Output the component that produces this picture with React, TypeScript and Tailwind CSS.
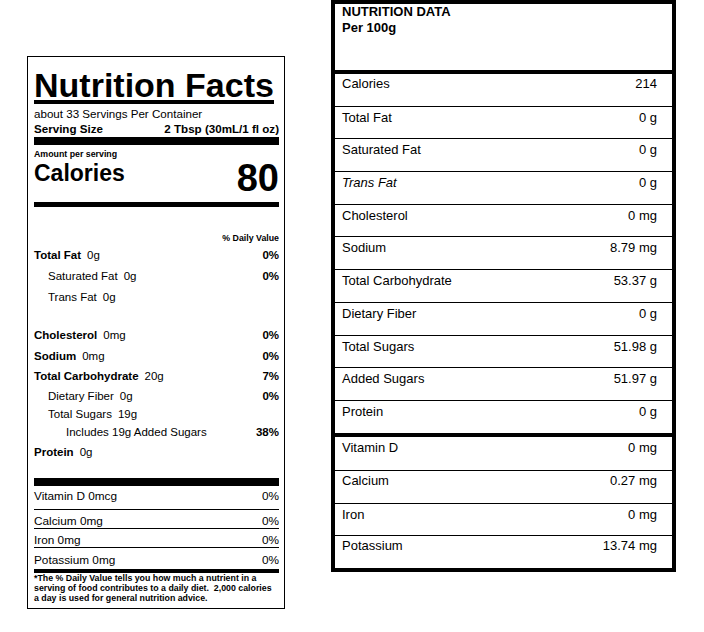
import React from 'react';

type Fact = {
  label: string;
  amount?: string;
  dv?: string;
  bold?: boolean;
  cls: string;
};

// per-serving rows of the label, margins follow the printed spacing
const facts: Fact[] = [
  { label: 'Total Fat', amount: '0g', dv: '0%', bold: true, cls: 'mt-[5px]' },
  { label: 'Saturated Fat', amount: '0g', dv: '0%', cls: 'mt-[7px] pl-[14px]' },
  { label: 'Trans Fat', amount: '0g', cls: 'mt-[7px] pl-[14px]' },
  { label: 'Cholesterol', amount: '0mg', dv: '0%', bold: true, cls: 'mt-[24px]' },
  { label: 'Sodium', amount: '0mg', dv: '0%', bold: true, cls: 'mt-[7px]' },
  { label: 'Total Carbohydrate', amount: '20g', dv: '7%', bold: true, cls: 'mt-[6px]' },
  { label: 'Dietary Fiber', amount: '0g', dv: '0%', cls: 'mt-[6px] pl-[14px]' },
  { label: 'Total Sugars', amount: '19g', cls: 'mt-[4px] pl-[14px]' },
  { label: 'Includes 19g Added Sugars', dv: '38%', cls: 'mt-[4px] pl-[32px]' },
  { label: 'Protein', amount: '0g', bold: true, cls: 'mt-[6px]' },
];

const minerals = [
  { label: 'Vitamin D 0mcg', cls: 'pt-[3px] pb-[6px] border-b border-black' },
  { label: 'Calcium 0mg', cls: 'pt-[4px] border-b border-black' },
  { label: 'Iron 0mg', cls: 'pt-[4px] border-b border-black' },
  { label: 'Potassium 0mg', cls: 'pt-[5px] pb-[2px]' },
];

type DataRow = { label: string; value: string; italic?: boolean; cls: string };

const perHundred: DataRow[] = [
  { label: 'Calories', value: '214', cls: 'h-[32.7px] pt-[2px] border-b' },
  { label: 'Total Fat', value: '0 g', cls: 'h-[32.7px] pt-[3px] border-b' },
  { label: 'Saturated Fat', value: '0 g', cls: 'h-[32.7px] pt-[3px] border-b' },
  { label: 'Trans Fat', value: '0 g', italic: true, cls: 'h-[32.7px] pt-[3px] border-b' },
  { label: 'Cholesterol', value: '0 mg', cls: 'h-[32.7px] pt-[3px] border-b' },
  { label: 'Sodium', value: '8.79 mg', cls: 'h-[32.7px] pt-[3px] border-b' },
  { label: 'Total Carbohydrate', value: '53.37 g', cls: 'h-[32.7px] pt-[3px] border-b' },
  { label: 'Dietary Fiber', value: '0 g', cls: 'h-[32.7px] pt-[3px] border-b' },
  { label: 'Total Sugars', value: '51.98 g', cls: 'h-[32.7px] pt-[3px] border-b' },
  { label: 'Added Sugars', value: '51.97 g', cls: 'h-[32.7px] pt-[3px] border-b' },
  { label: 'Protein', value: '0 g', cls: 'h-[36px] pt-[3px] border-b-4' },
  { label: 'Vitamin D', value: '0 mg', cls: 'h-[34px] pt-[3px] pr-[12px] border-b' },
  { label: 'Calcium', value: '0.27 mg', cls: 'h-[33px] pt-[2px] border-b' },
  { label: 'Iron', value: '0 mg', cls: 'h-[32px] pt-[3px] border-b' },
  { label: 'Potassium', value: '13.74 mg', cls: 'h-[32px] pt-[2px]' },
];

function NutritionLabel() {
  return (
    <div className="mt-[56px] ml-[27px] w-[258px] shrink-0 self-start border border-black bg-white pt-[13px] pr-[5px] pb-[5px] pl-[6px]">
      {/* Title */}
      <div className="flex">
        <h1 className="border-b-4 border-black text-[34px] font-bold leading-[30px]">Nutrition Facts</h1>
      </div>
      <p className="mt-[3px] text-[11.6px] leading-[14px]">about 33 Servings Per Container</p>
      <div className="mt-[1px] flex justify-between text-[11.6px] font-bold leading-[14px]">
        <span>Serving Size</span>
        <span>2 Tbsp (30mL/1 fl oz)</span>
      </div>
      <div className="mt-[1px] h-[8px] bg-black" />

      {/* Calories */}
      <p className="mt-[4px] text-[8.8px] font-bold leading-[10px]">Amount per serving</p>
      <div className="flex items-start justify-between">
        <span className="mt-[3px] text-[23px] font-bold leading-[23px]">Calories</span>
        <span className="text-[38px] font-bold leading-[38px]">80</span>
      </div>
      <div className="mt-[5px] h-[5px] bg-black" />

      <p className="mt-[26px] text-right text-[8.8px] font-bold leading-[10px]">% Daily Value</p>
      {facts.map(f => (
        <div key={f.label} className={`flex justify-between text-[11.5px] leading-[14px] ${f.cls}`}>
          <span>
            <span className={f.bold ? 'font-bold' : ''}>{f.label}</span>
            {f.amount && <span className="ml-[6px]">{f.amount}</span>}
          </span>
          {f.dv && <span className="font-bold">{f.dv}</span>}
        </div>
      ))}
      <div className="mt-[19px] h-[8px] bg-black" />

      {/* Vitamins & minerals */}
      {minerals.map(m => (
        <div key={m.label} className={`flex justify-between text-[11.8px] leading-[14px] ${m.cls}`}>
          <span>{m.label}</span>
          <span>0%</span>
        </div>
      ))}
      <div className="h-[4px] bg-black" />
      <p className="pr-[3px] text-[8.8px] font-bold leading-[10px]">
        *The % Daily Value tells you how much a nutrient in a serving of food contributes to a daily diet.&nbsp; 2,000 calories a day is used for general nutrition advice.
      </p>
    </div>
  );
}

function NutritionData() {
  return (
    <div className="ml-[46px] w-[345px] shrink-0 self-start border-4 border-black bg-white">
      <div className="h-[70px] border-b-4 border-black pl-[7px] text-[13px] font-bold leading-[16px]">
        <p>NUTRITION DATA</p>
        <p>Per 100g</p>
      </div>
      {perHundred.map(r => (
        <div
          key={r.label}
          className={`flex justify-between border-black pl-[7px] pr-[15px] text-[13px] leading-[16px] ${r.cls}`}
        >
          <span className={r.italic ? 'italic' : ''}>{r.label}</span>
          <span>{r.value}</span>
        </div>
      ))}
    </div>
  );
}

export default function App() {
  return (
    <div className="flex min-h-[632px] w-[704px] items-start bg-white font-['Liberation_Sans',Arial,sans-serif] text-black">
      <NutritionLabel />
      <NutritionData />
    </div>
  );
}
